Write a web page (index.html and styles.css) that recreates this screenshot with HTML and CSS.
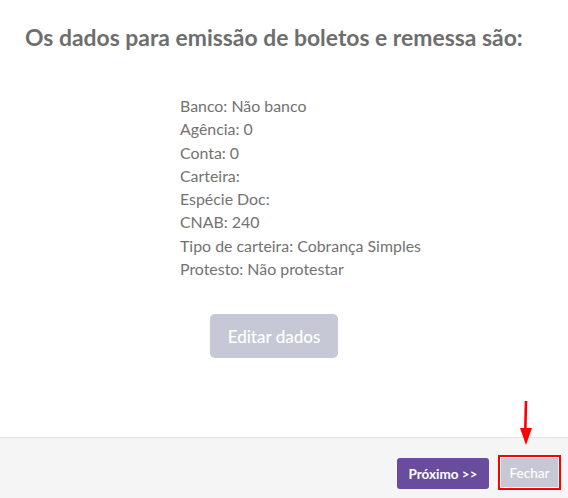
FILE: index.html
```html
<!DOCTYPE html>
<html lang="pt">
<head>
<meta charset="utf-8">
<link rel="stylesheet" href="styles.css">
</head>
<body>
<div class="modal">
  <div class="body">
    <h2 class="title">Os dados para emissão de boletos e remessa são:</h2>
    <div class="info">
      <p>Banco: Não banco</p>
      <p>Agência: 0</p>
      <p>Conta: 0</p>
      <p>Carteira:</p>
      <p>Espécie Doc:</p>
      <p>CNAB: 240</p>
      <p>Tipo de carteira: Cobrança Simples</p>
      <p>Protesto: Não protestar</p>
    </div>
    <div class="edit-row"><button class="btn-edit">Editar dados</button></div>
  </div>
  <div class="footer">
    <button class="btn btn-next">Próximo &gt;&gt;</button>
    <span class="highlight"><button class="btn btn-close">Fechar</button></span>
    <svg class="arrow" width="16" height="48" viewBox="0 0 16 48">
      <path d="M8 1 L7.3 30" stroke="#ff0000" stroke-width="2.6" fill="none"/>
      <path d="M2 28 L14 28 L8 45 Z" fill="#ff0000"/>
    </svg>
  </div>
</div>
</body>
</html>
```
FILE: styles.css
```css
* { box-sizing: border-box; }
html, body { margin: 0; padding: 0; background: #fff; }
body { font-family: Lato, "Open Sans", sans-serif; width: 568px; height: 498px; overflow: hidden; }
.modal { display: flex; flex-direction: column; height: 498px; }
.body { flex: 1; padding: 22px 25px 0 25px; }
.title { margin: 0; font-size: 22.9px; font-weight: 700; color: #6e6e6e; letter-spacing: 0; line-height: 30px; white-space: nowrap; }
.info { margin: 42px 0 0 155px; color: #727272; font-size: 15.9px; }
.info p { margin: 0; line-height: 23.3px; height: 23.3px; }
.edit-row { margin: 34px 0 0 185px; }
.btn-edit { width: 128px; height: 44px; border: 0; border-radius: 5px; background: #c6c9d5; color: #fff; font-family: Lato, sans-serif; font-size: 17px; font-weight: 500; }
.footer { position: relative; height: 61px; border-top: 1px solid #e2e2e2; background: #f5f5f5; display: flex; justify-content: flex-end; align-items: flex-start; padding: 20px 7px 0 0; gap: 9px; }
.btn { height: 31px; border: 0; border-radius: 3px; color: #fff; font-family: Lato, sans-serif; font-size: 13.5px; font-weight: 700; padding: 0; }
.btn-next { width: 92px; background: #6a4c9c; }
.highlight { display: inline-flex; border: 2px solid #ff0000; padding: 1px; background: #fff; margin-top: -3px; }
.btn-close { width: 57px; height: 29px; background: #c6c9d5; border-radius: 0; font-weight: 500; }
.arrow { position: absolute; right: 34px; top: -38px; }
```
